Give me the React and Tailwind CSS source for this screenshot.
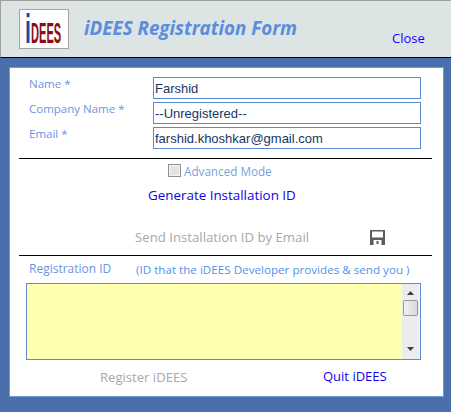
const FIELDS = [
  { label: "Name *", value: "Farshid" },
  { label: "Company Name *", value: "--Unregistered--" },
  { label: "Email *", value: "farshid.khoshkar@gmail.com" },
];

const ui = { fontFamily: '"Open Sans", "Noto Sans", sans-serif' };

function Logo() {
  return (
    <div className="ml-[18px] h-[40px] w-[50px] border border-[#a3a3a3] bg-white">
      <svg width="48" height="38" viewBox="0 0 48 38" className="block" style={{ fontFamily: '"Liberation Sans", sans-serif', fontWeight: 700 }}>
        <text transform="translate(5 33) scale(0.52 1)" fontSize="41" fill="#0f50a8">i</text>
        <text transform="translate(11 33) scale(0.37 1)" fontSize="30" fill="#8c0c14">DEES</text>
      </svg>
    </div>
  );
}

function SaveIcon() {
  return (
    <svg width="15" height="15" viewBox="0 0 15 15" className="block">
      <path fillRule="evenodd" fill="#5c5c5c" d="M0 0H15V15H0ZM2 1.5V7.5H13V1.5ZM3.5 10V15H11.5V10ZM6.5 11H8.5V14H6.5Z" />
    </svg>
  );
}

function Arrow({ down }) {
  return (
    <svg width="7" height="4" viewBox="0 0 7 4" className="block">
      <path fill="#404040" d={down ? "M0 0H7L3.5 4Z" : "M3.5 0L7 4H0Z"} />
    </svg>
  );
}

export default function App() {
  return (
    <div className="h-[412px] w-[451px] overflow-hidden bg-[#4a70ac]" style={ui}>
      {/* title bar */}
      <div className="relative flex h-[58px] items-center border-t border-l border-t-[#a0a0a0] border-l-[#a0a0a0] border-b border-b-black bg-[#dce4e4]">
        <Logo />
        <h1 className="ml-[15px] mt-[-2px] text-[18.8px] leading-6 font-bold italic text-[#5b8ddc]">iDEES Registration Form</h1>
        <button className="absolute top-[28px] left-[391px] text-[13px] leading-[18px] text-[#1a00ff]">Close</button>
      </div>

      {/* form panel */}
      <div className="mt-[9px] ml-[9px] flex h-[330px] w-[435px] flex-col border border-[#6d97d8] bg-white">
        <div className="mt-[9px] flex flex-col gap-[3px]">
          {FIELDS.map((f) => (
            <div key={f.label} className="flex h-[22px]">
              <label className="mt-[-1px] ml-[19px] w-[124px] text-[11.5px] leading-[15px] text-[#6b94e0]">{f.label}</label>
              <input
                readOnly
                value={f.value}
                className="h-[22px] w-[268px] border border-[#5b8bd0] px-[1px] text-[13px] text-[#17365f] outline-none"
                style={{ fontFamily: '"Liberation Sans", sans-serif' }}
              />
            </div>
          ))}
        </div>

        <div className="mt-[9px] ml-[9px] h-[1px] w-[413px] bg-black" />

        <div className="mt-[5px] flex h-[14px] items-start pl-[158px]">
          <span className="h-[13px] w-[13px] border border-[#8f8f8f] bg-[#e4e4e4] shadow-[inset_0_0_0_1px_#f4f4f4]" />
          <span className="ml-[3px] text-[11.7px] leading-[14px] text-[#7d9fe0]">Advanced Mode</span>
        </div>

        <button className="mt-[8px] ml-[138px] self-start text-[13.4px] leading-[18px] text-[#1400e8]">Generate Installation ID</button>

        <div className="mt-[24px] flex h-[18px] items-center pl-[125px]">
          <span className="w-[235px] text-[13.2px] leading-[18px] text-[#a8a8a8]">Send Installation ID by Email</span>
          <SaveIcon />
        </div>

        <div className="mt-[9px] ml-[9px] h-[1px] w-[413px] bg-black" />

        <div className="mt-[4px] flex h-[18px] items-start text-[12px] leading-[16px]">
          <span className="mt-[1px] ml-[19px] w-[107px] text-[#6b94e0]">Registration ID</span>
          <span className="mt-[2px] text-[11.65px] text-[#4f94e8]">(ID that the iDEES Developer provides &amp; send you )</span>
        </div>

        <div className="mt-[5px] ml-[16px] flex h-[77px] w-[395px] justify-end border border-[#5b8bd0] bg-[#ffffb0] pr-[1px]">
          <div className="flex h-full w-[17px] flex-col items-center bg-[#ececec] pt-[7px] pb-[8px]">
            <Arrow />
            <div className="mt-[5px] h-[16px] w-[15px] rounded-[2px] border border-[#9a9a9a] bg-gradient-to-r from-[#f2f2f2] to-[#d8d8d8]" />
            <div className="flex-1" />
            <Arrow down />
          </div>
        </div>

        <div className="mt-[7px] flex h-[18px] items-start text-[13px] leading-[18px]">
          <span className="mt-[1px] ml-[90px] w-[223px] text-[13.1px] text-[#a8a8a8]">Register iDEES</span>
          <button className="text-[#1400e8]">Quit iDEES</button>
        </div>
      </div>
    </div>
  );
}
